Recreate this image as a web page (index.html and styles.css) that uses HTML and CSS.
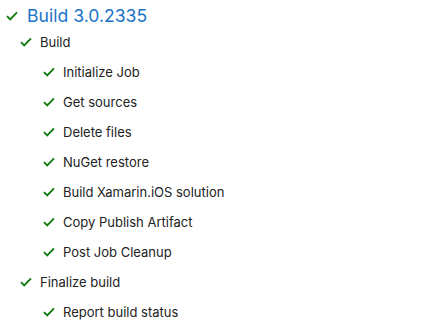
FILE: index.html
```html
<!DOCTYPE html>
<html>
<head>
<meta charset="utf-8">
<link rel="stylesheet" href="styles.css">
</head>
<body>
<div class="tree">
  <div class="title-row">
    <svg class="check" viewBox="0 0 12 10"><path d="M1 5.2 L4.2 8.4 L11 1.4"/></svg>
    <span class="title">Build 3.0.2335</span>
  </div>
  <div class="row l1"><svg class="check" viewBox="0 0 12 10"><path d="M1 5.2 L4.2 8.4 L11 1.4"/></svg><span>Build</span></div>
  <div class="row l2"><svg class="check" viewBox="0 0 12 10"><path d="M1 5.2 L4.2 8.4 L11 1.4"/></svg><span>Initialize Job</span></div>
  <div class="row l2"><svg class="check" viewBox="0 0 12 10"><path d="M1 5.2 L4.2 8.4 L11 1.4"/></svg><span>Get sources</span></div>
  <div class="row l2"><svg class="check" viewBox="0 0 12 10"><path d="M1 5.2 L4.2 8.4 L11 1.4"/></svg><span>Delete files</span></div>
  <div class="row l2"><svg class="check" viewBox="0 0 12 10"><path d="M1 5.2 L4.2 8.4 L11 1.4"/></svg><span>NuGet restore</span></div>
  <div class="row l2"><svg class="check" viewBox="0 0 12 10"><path d="M1 5.2 L4.2 8.4 L11 1.4"/></svg><span>Build Xamarin.iOS solution</span></div>
  <div class="row l2"><svg class="check" viewBox="0 0 12 10"><path d="M1 5.2 L4.2 8.4 L11 1.4"/></svg><span>Copy Publish Artifact</span></div>
  <div class="row l2"><svg class="check" viewBox="0 0 12 10"><path d="M1 5.2 L4.2 8.4 L11 1.4"/></svg><span>Post Job Cleanup</span></div>
  <div class="row l1"><svg class="check" viewBox="0 0 12 10"><path d="M1 5.2 L4.2 8.4 L11 1.4"/></svg><span>Finalize build</span></div>
  <div class="row l2"><svg class="check" viewBox="0 0 12 10"><path d="M1 5.2 L4.2 8.4 L11 1.4"/></svg><span>Report build status</span></div>
</div>
</body>
</html>
```
FILE: styles.css
```css
html, body {
  margin: 0;
  padding: 0;
  background: #fff;
}
body {
  font-family: Inter, "Liberation Sans", Arial, sans-serif;
  color: #333;
}
.tree {
  padding: 4px 0 0 6px;
  display: flex;
  flex-direction: column;
}
.title-row {
  display: flex;
  align-items: center;
  height: 23px;
  gap: 9px;
}
.title {
  font-size: 17.6px;
  color: #1a73c9;
}
.row {
  display: flex;
  align-items: center;
  height: 30px;
  gap: 8px;
  font-size: 13px;
  color: #222;
}
.l1 { padding-left: 14px; }
.l2 { padding-left: 37px; }
.check {
  width: 12px;
  height: 10px;
  flex: none;
}
.check path {
  fill: none;
  stroke: #107c10;
  stroke-width: 1.9;
  stroke-linecap: butt;
  stroke-linejoin: miter;
}
```
